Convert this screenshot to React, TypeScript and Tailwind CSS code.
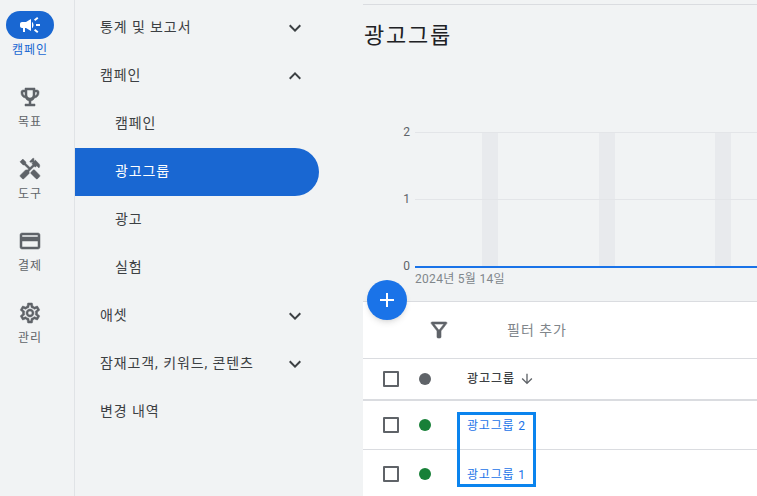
const railItems = [
  { label: '목표', icon: <path d="M19 5h-2V3H7v2H5c-1.1 0-2 .9-2 2v1c0 2.55 1.92 4.63 4.39 4.94A5.01 5.01 0 0 0 11 15.9V19H7v2h10v-2h-4v-3.1a5.01 5.01 0 0 0 3.61-2.96C19.08 12.63 21 10.55 21 8V7c0-1.1-.9-2-2-2zM5 8V7h2v3.82C5.84 10.4 5 9.3 5 8zm14 0c0 1.3-.84 2.4-2 2.82V7h2v1zm-4 2c0 1.65-1.35 3-3 3s-3-1.35-3-3V5h6v5z" /> },
  { label: '도구', icon: <path d="M21.67 18.17l-5.3-5.3h-.99l-2.54 2.54v.99l5.3 5.3c.39.39 1.02.39 1.41 0l2.12-2.12c.39-.38.39-1.02 0-1.41zM17.34 10.19l1.41-1.41 2.12 2.12c1.17-1.17 1.17-3.07 0-4.24l-3.54-3.54-1.41 1.41V1.71l-.7-.71-3.54 3.54.71.71h2.83l-1.41 1.41 1.06 1.06-2.89 2.89-4.13-4.13V5.06L4.83 2.04 2 4.87 5.03 7.9h1.41l4.13 4.13-.85.85H7.6l-5.3 5.3c-.39.39-.39 1.02 0 1.41l2.12 2.12c.39.39 1.02.39 1.41 0l5.3-5.3v-2.12l5.15-5.15 1.06 1.05z" /> },
  { label: '결제', icon: <path d="M20 4H4c-1.11 0-1.99.89-1.99 2L2 18c0 1.11.89 2 2 2h16c1.11 0 2-.89 2-2V6c0-1.11-.89-2-2-2zm0 14H4v-6h16v6zm0-10H4V6h16v2z" /> },
  { label: '관리', icon: <path d="M19.43 12.98c.04-.32.07-.64.07-.98s-.03-.66-.07-.98l2.11-1.65c.19-.15.24-.42.12-.64l-2-3.46c-.12-.22-.39-.3-.61-.22l-2.49 1c-.52-.4-1.08-.73-1.69-.98l-.38-2.65A.488.488 0 0 0 14 2h-4c-.25 0-.46.18-.49.42l-.38 2.65c-.61.25-1.17.59-1.69.98l-2.49-1c-.23-.09-.49 0-.61.22l-2 3.46c-.13.22-.07.49.12.64l2.11 1.65c-.04.32-.07.65-.07.98s.03.66.07.98l-2.11 1.65c-.19.15-.24.42-.12.64l2 3.46c.12.22.39.3.61.22l2.49-1c.52.4 1.08.73 1.69.98l.38 2.65c.03.24.24.42.49.42h4c.25 0 .46-.18.49-.42l.38-2.65c.61-.25 1.17-.59 1.69-.98l2.49 1c.23.09.49 0 .61-.22l2-3.46c.12-.22.07-.49-.12-.64l-2.11-1.65zM17.45 11.27c.04.31.05.52.05.73 0 .21-.02.43-.05.73l-.14 1.13.89.7 1.08.84-.7 1.21-1.27-.51-1.04-.42-.9.68c-.43.32-.84.56-1.25.73l-1.06.43-.16 1.13-.2 1.35h-1.4l-.19-1.35-.16-1.13-1.06-.43c-.43-.18-.83-.41-1.23-.71l-.91-.7-1.06.43-1.27.51-.7-1.21 1.08-.84.89-.7-.14-1.13c-.03-.31-.05-.54-.05-.74s.02-.43.05-.73l.14-1.13-.89-.7-1.08-.84.7-1.21 1.27.51 1.04.42.9-.68c.43-.32.84-.56 1.25-.73l1.06-.43.16-1.13.2-1.35h1.39l.19 1.35.16 1.13 1.06.43c.43.18.83.41 1.23.71l.91.7 1.06-.43 1.27-.51.7 1.21-1.07.85-.89.7.14 1.13zM12 8c-2.21 0-4 1.79-4 4s1.79 4 4 4 4-1.79 4-4-1.79-4-4-4zm0 6c-1.1 0-2-.9-2-2s.9-2 2-2 2 .9 2 2-.9 2-2 2z" /> },
]

const navItems = [
  { label: '통계 및 보고서', chevron: 'down' },
  { label: '캠페인', chevron: 'up' },
  { label: '캠페인', sub: true },
  { label: '광고그룹', sub: true, active: true },
  { label: '광고', sub: true },
  { label: '실험', sub: true },
  { label: '애셋', chevron: 'down' },
  { label: '잠재고객, 키워드, 콘텐츠', chevron: 'down' },
  { label: '변경 내역' },
]

function Chevron({ up }: { up?: boolean }) {
  return (
    <svg width="24" height="24" viewBox="0 0 24 24" fill="#3c4043">
      <path d={up ? 'M7.41 15.41 12 10.83l4.59 4.58L18 14l-6-6-6 6z' : 'M7.41 8.59 12 13.17l4.59-4.58L18 10l-6 6-6-6z'} />
    </svg>
  )
}

function Checkbox() {
  return <div className="w-4 h-4 border-2 border-[#5f6368] rounded-[1px] bg-white" />
}

function StatusDot({ color }: { color: string }) {
  return <div className={`w-3 h-3 rounded-full ${color}`} />
}

export default function App() {
  return (
    <div
      className="flex w-[757px] h-[496px] overflow-hidden bg-[#f1f3f4] relative text-[#3c4043]"
      style={{ fontFamily: 'Roboto, "Noto Sans CJK KR", sans-serif' }}
    >
      {/* Icon rail */}
      <div className="w-[75px] shrink-0 border-r border-[#e0e3e6] pt-[11px]">
        <div className="w-[60px] flex flex-col items-center h-[72px]">
          <div className="w-12 h-7 rounded-full bg-[#1967d2] flex items-center justify-center">
            <svg width="24" height="24" viewBox="0 0 24 24" fill="#fff">
              <path d="M18 11v2h4v-2h-4zm-2 6.61c.96.71 2.21 1.65 3.2 2.39.4-.53.8-1.07 1.2-1.6-.99-.74-2.24-1.68-3.2-2.4-.4.54-.8 1.08-1.2 1.61zM20.4 5.6c-.4-.53-.8-1.07-1.2-1.6-.99.74-2.24 1.68-3.2 2.4.4.53.8 1.07 1.2 1.6.96-.72 2.21-1.65 3.2-2.4zM4 9c-1.1 0-2 .9-2 2v2c0 1.1.9 2 2 2h1v4h2v-4h1l5 3V6L8 9H4zm11.5 3c0-1.33-.58-2.53-1.5-3.35v6.69c.92-.81 1.5-2.01 1.5-3.34z" />
            </svg>
          </div>
          <span className="text-xs leading-5 text-[#1967d2] mt-[1px] tracking-[1px]">캠페인</span>
        </div>
        {railItems.map(item => (
          <div key={item.label} className="w-[60px] flex flex-col items-center h-[72px] pt-[2px]">
            <svg width="24" height="24" viewBox="0 0 24 24" fill="#5f6368" stroke="#5f6368" strokeWidth="0.5">{item.icon}</svg>
            <span className="text-xs leading-5 text-[#5f6368] mt-[3px] tracking-[1px]">{item.label}</span>
          </div>
        ))}
      </div>

      {/* Section nav */}
      <div className="w-[288px] shrink-0 pt-1">
        {navItems.map((item, i) => (
          <div
            key={i}
            className={`h-12 w-[244px] flex items-center justify-between text-sm tracking-[0.9px] rounded-r-full ${item.sub ? 'pl-10' : 'pl-[25px]'} ${item.active ? 'bg-[#1967d2] text-white' : 'text-[#3c4043]'}`}
          >
            <span className="pb-[2px]">{item.label}</span>
            {item.chevron && (
              <span className="mr-[12px]">
                <Chevron up={item.chevron === 'up'} />
              </span>
            )}
          </div>
        ))}
      </div>

      {/* Main */}
      <div className="flex-1 min-w-0 flex flex-col pt-1">
        <div className="border-t border-[#dadce0] h-[50px] shrink-0 flex items-end">
          <h1 className="text-[22px] leading-8 text-[#202124] pl-px mb-[2px] tracking-[1.8px]">광고그룹</h1>
        </div>

        <div className="h-[247px] shrink-0">
          <svg width="394" height="247" viewBox="0 0 394 247">
            <rect x="119" y="78" width="16" height="134" fill="#e8eaed" />
            <rect x="236" y="78" width="16" height="134" fill="#e8eaed" />
            <rect x="352" y="78" width="16" height="134" fill="#e8eaed" />
            <line x1="52" x2="394" y1="78.5" y2="78.5" stroke="#e3e5e8" />
            <line x1="52" x2="394" y1="145.5" y2="145.5" stroke="#e3e5e8" />
            <line x1="52" x2="394" y1="213" y2="213" stroke="#1a73e8" strokeWidth="2" />
            <g fill="#5f6368" fontSize="12" textAnchor="end">
              <text x="47" y="82">2</text>
              <text x="47" y="149">1</text>
              <text x="47" y="216">0</text>
            </g>
            <text x="52" y="229" fill="#80868b" fontSize="12" letterSpacing="0.3">2024년 5월 14일</text>
          </svg>
        </div>

        <div className="flex-1 bg-white">
          <div className="h-[58px] border-t border-[#dadce0] border-b flex items-center">
            <svg className="ml-[64px]" width="24" height="24" viewBox="0 0 24 24" fill="#5f6368" stroke="#5f6368" strokeWidth="0.6">
              <path d="M7 6h10l-5.01 6.3L7 6zm-2.75-.39C6.27 8.2 10 13 10 13v6c0 .55.45 1 1 1h2c.55 0 1-.45 1-1v-6s3.72-4.8 5.74-7.39A.998.998 0 0 0 18.95 4H5.04c-.83 0-1.3.95-.79 1.61z" />
            </svg>
            <span className="ml-[56px] text-sm text-[#80868b] tracking-[1px]">필터 추가</span>
          </div>
          <div className="h-[42px] border-b-2 border-[#dadce0] flex items-center">
            <div className="ml-5"><Checkbox /></div>
            <div className="ml-5"><StatusDot color="bg-[#5f6368]" /></div>
            <span className="ml-9 text-xs font-medium text-[#3c4043] tracking-[1px]">광고그룹</span>
            <svg className="ml-1" width="16" height="16" viewBox="0 0 24 24" fill="#5f6368">
              <path d="M20 12l-1.41-1.41L13 16.17V4h-2v12.17l-5.58-5.59L4 12l8 8 8-8z" />
            </svg>
          </div>
          <div className="h-[49px] border-b border-[#dadce0] flex items-center">
            <div className="ml-5"><Checkbox /></div>
            <div className="ml-5"><StatusDot color="bg-[#188038]" /></div>
            <span className="ml-9 pt-px text-xs text-[#1a73e8] tracking-[0.8px]">광고그룹 2</span>
          </div>
          <div className="h-[48px] flex items-center">
            <div className="ml-5"><Checkbox /></div>
            <div className="ml-5"><StatusDot color="bg-[#188038]" /></div>
            <span className="ml-9 pt-px text-xs text-[#1a73e8] tracking-[0.8px]">광고그룹 1</span>
          </div>
        </div>
      </div>

      {/* Add button floats over the chart edge */}
      <div className="absolute left-[367px] top-[280px] w-10 h-10 rounded-full bg-[#1a73e8] shadow-md flex items-center justify-center">
        <svg width="24" height="24" viewBox="0 0 24 24" fill="#fff">
          <path d="M19 13h-6v6h-2v-6H5v-2h6V5h2v6h6v2z" />
        </svg>
      </div>

      {/* Highlight box over the names */}
      <div className="absolute left-[457px] top-[412px] w-[79px] h-[75px] border-[3px] border-[#0b84ee]" />
    </div>
  )
}
